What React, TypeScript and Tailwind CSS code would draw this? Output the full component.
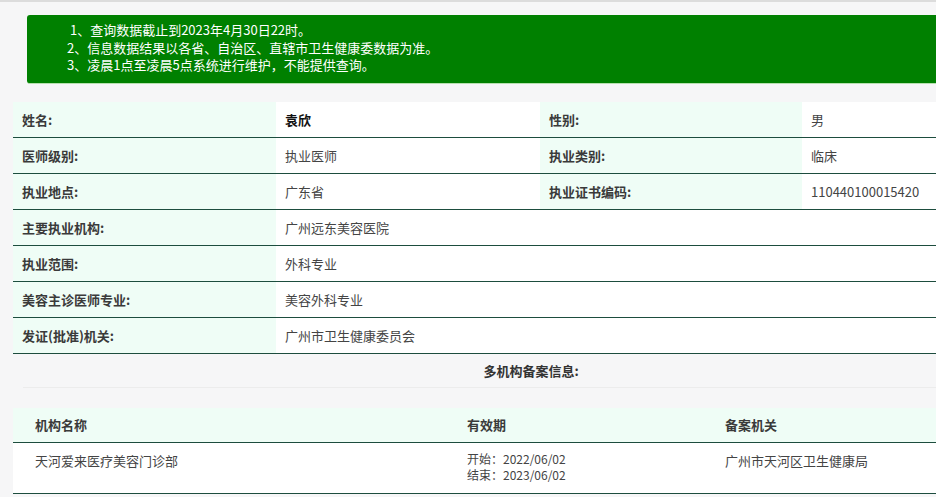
const rows: [string, string, string?, string?][] = [
  ["姓名:", "袁欣", "性别:", "男"],
  ["医师级别:", "执业医师", "执业类别:", "临床"],
  ["执业地点:", "广东省", "执业证书编码:", "110440100015420"],
  ["主要执业机构:", "广州远东美容医院"],
  ["执业范围:", "外科专业"],
  ["美容主诊医师专业:", "美容外科专业"],
  ["发证(批准)机关:", "广州市卫生健康委员会"],
];

const App = () => {
  return (
    <div
      className="w-[936px] h-[497px] overflow-hidden bg-[#f6f6f7] border-t-2 border-[#dcdcdc] text-[13px] text-[#333]"
      style={{ fontFamily: '"Noto Sans CJK SC", "Noto Sans", sans-serif' }}
    >
      <div className="w-[1100px]">
        {/* notice box */}
        <div className="ml-[27px] mt-[13px] h-[69px] w-[1040px] rounded-[3px] bg-[#008000] border-b border-[#b7e0b0] pl-[40px] pt-[6px] text-white leading-[17.5px]">
          <p>&nbsp;1、查询数据截止到2023年4月30日22时。</p>
          <p>2、信息数据结果以各省、自治区、直辖市卫生健康委数据为准。</p>
          <p>3、凌晨1点至凌晨5点系统进行维护，不能提供查询。</p>
        </div>

        {/* doctor info */}
        <div className="ml-[13px] mt-[18px] w-[1052px]">
          {rows.map(([l1, v1, l2, v2], i) => (
            <div key={i} className="grid grid-cols-[263px_264px_262px_263px] h-[36px] border-b border-[#1d4d3e]">
              <div className="bg-[#effdf6] pl-[9px] flex items-center font-bold text-[#3a3a3a]">{l1}</div>
              <div className={`bg-white pl-[9px] flex items-center ${i === 0 ? "font-bold text-[#111]" : "text-[#444]"}`}>{v1}</div>
              <div className={`${l2 ? "bg-[#effdf6]" : "bg-white"} pl-[9px] flex items-center font-bold text-[#3a3a3a]`}>{l2}</div>
              <div className="bg-white pl-[9px] flex items-center text-[#444]">{v2}</div>
            </div>
          ))}

          <div className="h-[34px] flex items-center justify-center font-bold text-[#333] border-b border-[#ececec] ml-[10px] pr-[26px]">
            多机构备案信息:
          </div>

          {/* multi-agency table */}
          <div className="mt-[20px]">
            <div className="grid grid-cols-[432px_258px_362px] h-[35px] bg-[#effdf6] border-b border-[#1d4d3e] font-bold text-[#3a3a3a]">
              <div className="pl-[22px] flex items-center">机构名称</div>
              <div className="pl-[22px] flex items-center">有效期</div>
              <div className="pl-[22px] flex items-center">备案机关</div>
            </div>
            <div className="grid grid-cols-[432px_258px_362px] h-[51px] bg-white border-b border-[#1d4d3e] text-[#444]">
              <div className="pl-[22px] pt-[8px]">天河爱来医疗美容门诊部</div>
              <div className="pl-[22px] pt-[8px] text-[12px] leading-[16px]">
                <p>开始：2022/06/02</p>
                <p>结束：2023/06/02</p>
              </div>
              <div className="pl-[22px] pt-[8px]">广州市天河区卫生健康局</div>
            </div>
          </div>
        </div>
      </div>
    </div>
  );
};

export default App;
